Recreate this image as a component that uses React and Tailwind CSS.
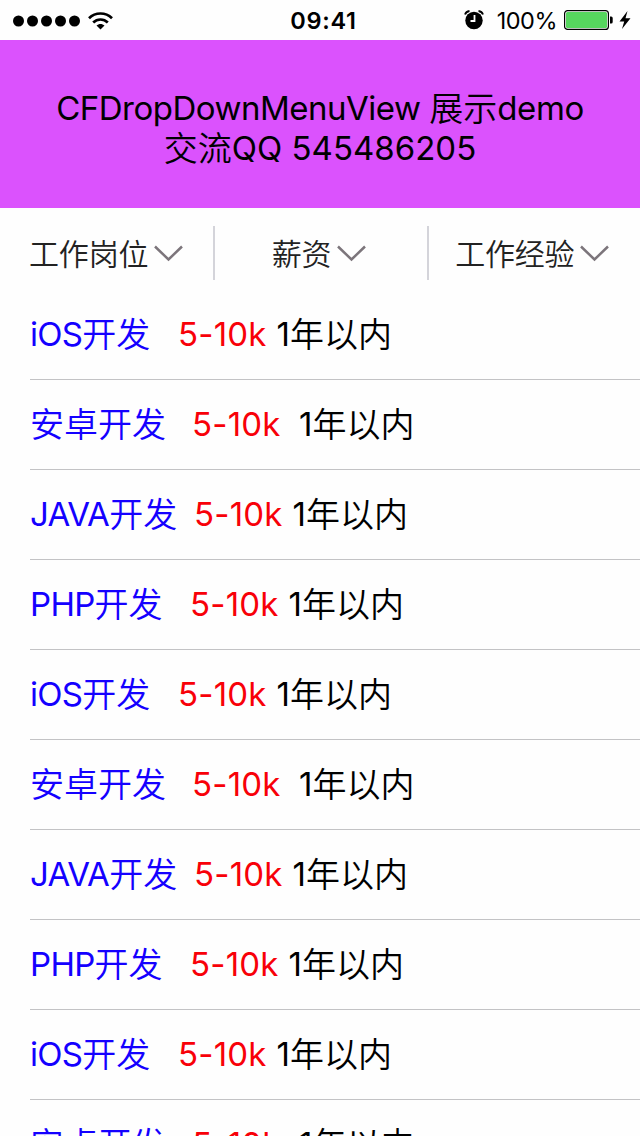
import React from 'react';

const ROLES = [
  { latin: 'iOS', cjk: '开发', width: 'w-[148px]', gap: 'w-[98.5px]' },
  { latin: '', cjk: '安卓开发', width: 'w-[162px]', gap: 'w-[107px]' },
  { latin: 'JAVA', cjk: '开发', width: 'w-[164px]', gap: 'w-[98.5px]' },
  { latin: 'PHP', cjk: '开发', width: 'w-[160px]', gap: 'w-[98.5px]' },
];

const ROWS = Array.from({ length: 10 }, (_, i) => ROLES[i % ROLES.length]);

const FILTERS = ['工作岗位', '薪资', '工作经验'];

function StatusBar() {
  return (
    <header className="grid h-10 grid-cols-3 items-center bg-[#fefefe] text-black">
      <div className="flex items-center pl-[13px]">
        <svg width="68" height="12" viewBox="0 0 68 12" aria-hidden="true">
          {[5.5, 19.5, 33.5, 47.5, 61.5].map((x) => (
            <circle key={x} cx={x} cy="6" r="5.5" />
          ))}
        </svg>
        <svg className="ml-[7px]" width="25" height="18" viewBox="0 0 25 18" fill="none" stroke="#000" aria-hidden="true">
          <path d="M1 6.2C7.4-.1 17.6-.1 24 6.2" strokeWidth="2.7" />
          <path d="M5.2 10.5c4.1-4 10.5-4 14.6 0" strokeWidth="2.7" />
          <path d="M8.5 13.6c2.2-2.2 5.8-2.2 8 0L12.5 17.6z" fill="#000" stroke="none" />
        </svg>
      </div>
      <div className="pt-[1px] pl-[7px] text-center text-[23.5px] leading-10 font-semibold tracking-[0.7px]">09:41</div>
      <div className="-mt-px flex items-center justify-end pr-[9px]">
        <svg className="mr-[13px]" width="20" height="20" viewBox="0 0 20 20" fill="none" aria-hidden="true">
          <circle cx="10" cy="10.5" r="8.7" fill="#000" />
          <path d="M1 4.5C1.5 3 3 1.3 5.5 1M19 4.5C18.5 3 17 1.3 14.5 1" stroke="#000" strokeWidth="1.8" />
          <path d="M10.5 5v6H6.5" stroke="#fff" strokeWidth="1.8" />
        </svg>
        <span className="pt-[1px] text-[23.5px] leading-10 tracking-[-0.5px]">100%</span>
        <svg className="ml-[7px]" width="49" height="20" viewBox="0 0 49 20" fill="none" aria-hidden="true">
          <rect x=".6" y=".6" width="43.8" height="18.8" rx="3" stroke="#000" strokeWidth="1.2" />
          <rect x="2" y="2" width="41" height="16" rx="1.5" fill="#56d65e" />
          <path d="M46 6.5h1.2a1.5 1.5 0 0 1 1.5 1.5v4a1.5 1.5 0 0 1-1.5 1.5H46z" fill="#000" />
        </svg>
        <svg className="ml-[6px]" width="12" height="20" viewBox="0 0 12 20" aria-hidden="true">
          <path d="M8.5 1L.5 11.5h4.7L3 19l8.5-10.8H6.5z" />
        </svg>
      </div>
    </header>
  );
}

function Banner() {
  return (
    <div className="flex h-[168px] flex-col items-center justify-center bg-[#db52fd] pt-[7px] text-[33px] text-black">
      <div className="h-10 leading-10 whitespace-pre">
        <span className="tracking-[-0.5px]">CFDropDownMenuView </span>
        <span className="align-[-1px] text-[34px] font-[350]">展示</span>
        <span className="tracking-[-0.4px]">demo</span>
      </div>
      <div className="h-10 leading-10 whitespace-pre">
        <span className="align-[-1px] text-[34px] font-[350]">交流</span>
        <span className="tracking-[0px]">QQ 545486205</span>
      </div>
    </div>
  );
}

function FilterBar() {
  return (
    <nav className="grid h-[90px] grid-cols-3 items-center text-[#222]">
      {FILTERS.map((label, i) => (
        <button
          key={label}
          className={`flex h-[54px] items-center justify-center text-[30px] ${i > 0 ? 'border-l-2 border-[#d4d4da] pr-1' : 'pr-px'}`}
        >
          <span className="pt-[2px] leading-[54px] font-[350] tracking-[-0.2px]">{label}</span>
          <svg className="ml-[6px]" width="29" height="17" viewBox="0 0 29 17" fill="none" stroke="#7c757b" strokeWidth="2.5" aria-hidden="true">
            <path d="M1 1.5L14.5 14.5L28 1.5" />
          </svg>
        </button>
      ))}
    </nav>
  );
}

function JobRow({ role }) {
  return (
    <li className="ml-[30px] flex h-[90px] items-baseline border-b border-[#c3c3c5] text-[33px] leading-[88px] whitespace-nowrap">
      <div className={`shrink-0 text-[#1400ff] ${role.width}`}>
        {role.latin && <span className="tracking-[-0.7px]">{role.latin}</span>}
        <span className="align-[-1px] text-[34px] font-[350]">{role.cjk}</span>
      </div>
      <span className={`shrink-0 tracking-[0.2px] text-[#f80008] ${role.gap}`}>5-10k</span>
      <div className="text-black">
        <span>1</span>
        <span className="align-[-1px] text-[34px] font-[350]">年以内</span>
      </div>
    </li>
  );
}

export default function App() {
  return (
    <main className="h-[1136px] w-[640px] overflow-hidden bg-[#fefefe] font-['Inter','Noto_Sans_CJK_SC',sans-serif]">
      <StatusBar />
      <Banner />
      <FilterBar />
      <ul className="-mt-2">
        {ROWS.map((role, i) => (
          <JobRow key={i} role={role} />
        ))}
      </ul>
    </main>
  );
}
